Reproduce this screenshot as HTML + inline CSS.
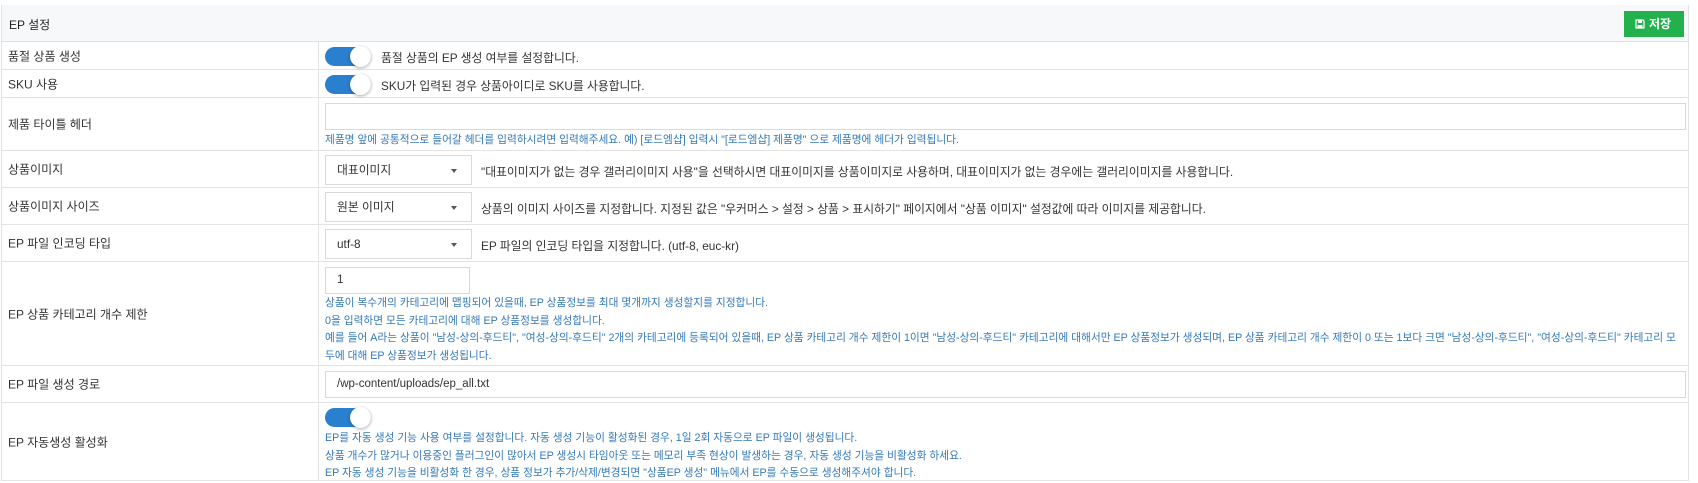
<!DOCTYPE html>
<html><head><meta charset="utf-8">
<style>
*{box-sizing:border-box;margin:0;padding:0}
body{width:1698px;height:482px;background:#fff;font-family:"Liberation Sans","Noto Sans CJK KR",sans-serif;color:#333;font-size:12px;position:relative;overflow:hidden}
.panel{position:absolute;left:1px;top:5px;width:1688px;height:476px;border:1px solid #e3e3e3;border-top:none}
.hdr{position:absolute;left:0;top:0;width:100%;height:37px;background:#f6f8fa;border-bottom:1px solid #e0e0e0}
.hdr .t{position:absolute;left:7px;top:11px;font-size:12px;color:#222}
.btn{position:absolute;left:1622px;top:6px;width:60px;height:26px;background:#22b14c;color:#fff;font-size:12px;font-weight:bold;line-height:26px;padding-left:11px}
.row{position:absolute;left:0;width:100%;border-bottom:1px solid #e3e3e3}
.lab{position:absolute;left:0;top:0;bottom:0;width:317px;border-right:1px solid #e3e3e3}
.lab span{position:absolute;left:6px;top:50%;transform:translateY(-50%);font-size:12px;white-space:nowrap}
.tg{position:absolute;width:46px;height:19px;border-radius:10px;background:#2a7fcf}
.tg:after{content:"";position:absolute;right:0;top:-1px;width:21px;height:21px;border-radius:50%;background:#fff;box-shadow:0 1px 3px rgba(0,0,0,.35)}
.d{position:absolute;white-space:nowrap;font-size:11.8px;color:#333}
.h{position:absolute;white-space:nowrap;font-size:10.7px;color:#3479b8;line-height:17.5px}
.inp{position:absolute;border:1px solid #d9d9d9;background:#fff;font-size:11.5px;padding-left:11px;color:#333}
.sel{position:absolute;border:1px solid #d9d9d9;background:#fff;width:147px;height:30px;font-size:11.8px;padding-left:11px;line-height:28px}
.sel:after{content:"";position:absolute;right:14px;top:13px;border-left:3.5px solid transparent;border-right:3.5px solid transparent;border-top:4px solid #555}
</style></head><body>
<div class="panel">
<div class="hdr"><span class="t">EP 설정</span>
<div class="btn"><svg width="10" height="10" viewBox="0 0 10 10" style="vertical-align:-1px;margin-right:4px"><path d="M1 1h7l1 1v7H1z" fill="none" stroke="#fff" stroke-width="1.2"/><rect x="3" y="1.5" width="4" height="2.5" fill="#fff"/><rect x="2.5" y="6" width="5" height="2.5" fill="#fff"/></svg>저장</div></div>

<div class="row" style="top:37px;height:28px"><div class="lab"><span>품절 상품 생성</span></div>
<div class="tg" style="left:323px;top:5px"></div><div class="d" style="left:379px;top:7px">품절 상품의 EP 생성 여부를 설정합니다.</div></div>

<div class="row" style="top:65px;height:28px"><div class="lab"><span>SKU 사용</span></div>
<div class="tg" style="left:323px;top:5px"></div><div class="d" style="left:379px;top:7px">SKU가 입력된 경우 상품아이디로 SKU를 사용합니다.</div></div>

<div class="row" style="top:93px;height:53px"><div class="lab"><span>제품 타이틀 헤더</span></div>
<div class="inp" style="left:323px;top:5px;width:1361px;height:27px"></div>
<div class="h" style="left:323px;top:34px">제품명 앞에 공통적으로 들어갈 헤더를 입력하시려면 입력해주세요. 예) [로드엠샵] 입력시 "[로드엠샵] 제품명" 으로 제품명에 헤더가 입력됩니다.</div></div>

<div class="row" style="top:146px;height:37px"><div class="lab"><span>상품이미지</span></div>
<div class="sel" style="left:323px;top:4px">대표이미지</div>
<div class="d" style="left:479px;top:12px">"대표이미지가 없는 경우 갤러리이미지 사용"을 선택하시면 대표이미지를 상품이미지로 사용하며, 대표이미지가 없는 경우에는 갤러리이미지를 사용합니다.</div></div>

<div class="row" style="top:183px;height:37px"><div class="lab"><span>상품이미지 사이즈</span></div>
<div class="sel" style="left:323px;top:4px">원본 이미지</div>
<div class="d" style="left:479px;top:12px">상품의 이미지 사이즈를 지정합니다. 지정된 값은 "우커머스 &gt; 설정 &gt; 상품 &gt; 표시하기" 페이지에서 "상품 이미지" 설정값에 따라 이미지를 제공합니다.</div></div>

<div class="row" style="top:220px;height:37px"><div class="lab"><span>EP 파일 인코딩 타입</span></div>
<div class="sel" style="left:323px;top:4px">utf-8</div>
<div class="d" style="left:479px;top:12px">EP 파일의 인코딩 타입을 지정합니다. (utf-8, euc-kr)</div></div>

<div class="row" style="top:257px;height:104px"><div class="lab"><span>EP 상품 카테고리 개수 제한</span></div>
<div class="inp" style="left:323px;top:5px;width:145px;height:27px;line-height:25px">1</div>
<div class="h" style="left:323px;top:33px">상품이 복수개의 카테고리에 맵핑되어 있을때, EP 상품정보를 최대 몇개까지 생성할지를 지정합니다.<br>0을 입력하면 모든 카테고리에 대해 EP 상품정보를 생성합니다.<br>예를 들어 A라는 상품이 "남성-상의-후드티", "여성-상의-후드티" 2개의 카테고리에 등록되어 있을때, EP 상품 카테고리 개수 제한이 1이면 "남성-상의-후드티" 카테고리에 대해서만 EP 상품정보가 생성되며, EP 상품 카테고리 개수 제한이 0 또는 1보다 크면 "남성-상의-후드티", "여성-상의-후드티" 카테고리 모<br>두에 대해 EP 상품정보가 생성됩니다.</div></div>

<div class="row" style="top:361px;height:37px"><div class="lab"><span>EP 파일 생성 경로</span></div>
<div class="inp" style="left:323px;top:5px;width:1361px;height:27px;line-height:25px">/wp-content/uploads/ep_all.txt</div></div>

<div class="row" style="top:398px;height:77px;border-bottom:none"><div class="lab"><span>EP 자동생성 활성화</span></div>
<div class="tg" style="left:323px;top:5px"></div>
<div class="h" style="left:323px;top:27px">EP를 자동 생성 기능 사용 여부를 설정합니다. 자동 생성 기능이 활성화된 경우, 1일 2회 자동으로 EP 파일이 생성됩니다.<br>상품 개수가 많거나 이용중인 플러그인이 많아서 EP 생성시 타임아웃 또는 메모리 부족 현상이 발생하는 경우, 자동 생성 기능을 비활성화 하세요.<br>EP 자동 생성 기능을 비활성화 한 경우, 상품 정보가 추가/삭제/변경되면 "상품EP 생성" 메뉴에서 EP를 수동으로 생성해주셔야 합니다.</div></div>
</div>
</body></html>
